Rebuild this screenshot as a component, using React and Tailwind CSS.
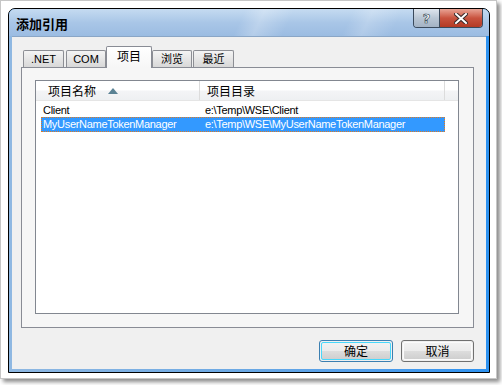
const ui = { fontFamily: '"Liberation Sans", "Noto Sans CJK SC", sans-serif' };

const Tab = ({ label, w, ml = 0, active }) =>
    active ? (
        <div
            className={`relative z-10 -mb-px h-[22px] ${w} ${ml} border border-b-0 border-[#898c95] rounded-t-[2px] bg-gradient-to-b from-white to-[#f6f6f6] flex items-start justify-center pt-[1px] text-[12px] text-black`}
        >
            {label}
        </div>
    ) : (
        <div
            className={`h-[17px] ${w} ${ml} border border-b-0 border-[#8c8e94] rounded-t-[2px] bg-gradient-to-b from-[#f4f4f4] via-[#e6e6e6] to-[#d8d8d8] flex items-center justify-center text-[11px] text-black`}
        >
            {label}
        </div>
    );

const WinButton = ({ label, isDefault }) => (
    <div
        className={`h-[22px] rounded-[3px] border ${isDefault ? "border-[#3c7fb1]" : "border-[#707070]"} p-px`}
    >
        <div
            className={`h-full w-full rounded-[2px] border ${isDefault ? "border-[#48d8fb]" : "border-[#fbfbfb]"} flex items-center justify-center text-[12px] text-black bg-[linear-gradient(#f2f2f2_0%,#ebebeb_50%,#dddddd_50%,#cfcfcf_100%)]`}
        >
            {label}
        </div>
    </div>
);

export default function App() {
    return (
        <div className="w-[502px] h-[385px] bg-white overflow-hidden" style={ui}>
            {/* screenshot frame with drop shadow */}
            <div className="w-[497px] h-[379px] border border-[#c6c6c6] bg-white pl-[7px] pt-[7px] shadow-[3px_3px_4px_rgba(0,0,0,0.45)]">
                {/* dialog window */}
                <div className="w-[482px] h-[365px] border border-black rounded-t-[7px] overflow-hidden flex flex-col bg-[#4d9be4]">
                    {/* title bar */}
                    <div className="h-[27px] shrink-0 flex items-start bg-gradient-to-b from-[#c5dbf1] via-[#a9c6e7] to-[#9bbce2] relative">
                        <div className="absolute inset-0 bg-[linear-gradient(115deg,transparent_0%,transparent_48%,rgba(255,255,255,0.25)_52%,transparent_58%,transparent_70%,rgba(255,255,255,0.2)_74%,transparent_80%)]" />
                        <span
                            className="relative pl-[7px] pt-[5px] text-[13px] font-bold text-black"
                            style={{ fontFamily: '"Noto Sans CJK SC", sans-serif' }}
                        >
                            添加引用
                        </span>
                        <div className="relative ml-auto mr-[6px] flex h-[19px] rounded-b-[4px] border border-t-0 border-[#3a4a5c] overflow-hidden">
                            <div className="w-[26px] h-full bg-gradient-to-b from-[#dfe6ee] via-[#b9c6d4] to-[#a4b3c4] border-r border-[#3a4a5c] flex items-center justify-center">
                                <span
                                    className="text-[13px] font-bold text-white leading-none"
                                    style={{ WebkitTextStroke: "0.6px #2b3a4a", fontFamily: '"DejaVu Sans", sans-serif' }}
                                >
                                    ?
                                </span>
                            </div>
                            <div className="w-[42px] h-full bg-gradient-to-b from-[#e8a496] via-[#c9533f] to-[#b33a24] flex items-center justify-center">
                                <svg width="14" height="11" viewBox="0 0 14 11">
                                    <path d="M2 1 L12 10 M12 1 L2 10" stroke="#3b2a2a" strokeWidth="4" strokeLinecap="square" />
                                    <path d="M2 1 L12 10 M12 1 L2 10" stroke="#ffffff" strokeWidth="2" strokeLinecap="square" />
                                </svg>
                            </div>
                        </div>
                    </div>

                    {/* frame + client area */}
                    <div className="flex-1 px-[3px] pb-[3px] bg-gradient-to-r from-[#8fb8e2] via-[#6aa8e4] to-[#2d92f0]">
                        <div className="h-full bg-[#f0f0f0] border-t border-[#8aa6c6] pl-[9px] pt-[9px] flex flex-col">
                            {/* tabs */}
                            <div className="flex items-end h-[21px] pl-[2px]">
                                <Tab label=".NET" w="w-[41px]" />
                                <Tab label="COM" w="w-[40px]" ml="ml-[2px]" />
                                <Tab label="项目" w="w-[46px]" active />
                                <Tab label="浏览" w="w-[40px]" />
                                <Tab label="最近" w="w-[41px]" ml="ml-px" />
                            </div>

                            {/* tab page */}
                            <div className="w-[453px] h-[261px] border border-[#898c95] bg-[#f6f6f6] pl-[13px] pt-[12px]">
                                <div className="w-[424px] h-[234px] border border-[#828790] bg-white flex flex-col">
                                    {/* header */}
                                    <div className="h-[20px] flex text-[12px] text-black bg-[linear-gradient(#ffffff_0%,#ffffff_45%,#f3f4f6_55%,#eef0f2_100%)] border-b border-[#e5e5e5]">
                                        <div className="w-[164px] border-r border-[#dcdcdc] flex items-center pl-[12px]" style={{ fontFamily: '"Noto Sans CJK SC", sans-serif' }}>
                                            项目名称
                                            <svg className="ml-[12px]" width="10" height="6" viewBox="0 0 10 6">
                                                <path d="M5 0 L10 6 L0 6 Z" fill="#5a8294" />
                                            </svg>
                                        </div>
                                        <div className="w-[245px] border-r border-[#dcdcdc] flex items-center pl-[7px]" style={{ fontFamily: '"Noto Sans CJK SC", sans-serif' }}>
                                            项目目录
                                        </div>
                                        <div className="flex-1" />
                                    </div>

                                    {/* rows */}
                                    <div className="pt-[1px] text-[11px] tracking-[-0.3px] text-black">
                                        <div className="h-[15px] flex items-center ml-[5px] w-[404px] pt-[1px]">
                                            <div className="w-[159px] pl-[2px]">Client</div>
                                            <div className="pl-[5px]">e:\Temp\WSE\Client</div>
                                        </div>
                                        <div className="h-[15px] flex items-center ml-[5px] w-[404px] bg-[#3399ff] text-white border border-dotted border-[#e07a20]">
                                            <div className="w-[158px] pl-[1px]">MyUserNameTokenManager</div>
                                            <div className="pl-[5px]">e:\Temp\WSE\MyUserNameTokenManager</div>
                                        </div>
                                    </div>
                                </div>
                            </div>

                            {/* buttons */}
                            <div className="flex justify-end gap-[8px] pt-[12px] w-[453px]" style={{ fontFamily: '"Noto Sans CJK SC", sans-serif' }}>
                                <div className="w-[74px]">
                                    <WinButton label="确定" isDefault />
                                </div>
                                <div className="w-[73px]">
                                    <WinButton label="取消" />
                                </div>
                            </div>
                        </div>
                    </div>
                </div>
            </div>
        </div>
    );
}
